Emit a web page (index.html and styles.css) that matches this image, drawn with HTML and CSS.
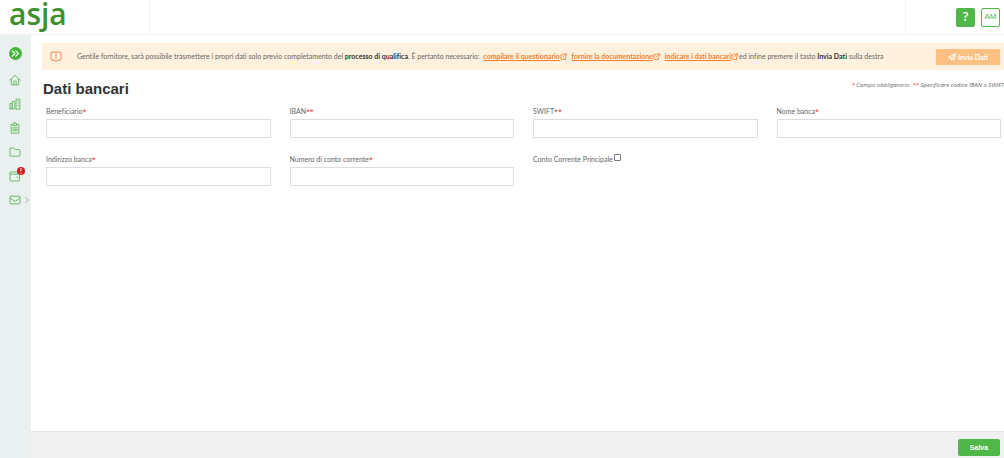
FILE: index.html
```html
<!DOCTYPE html>
<html lang="it">

<head>
  <meta charset="UTF-8">
  <meta name="viewport" content="width=device-width, initial-scale=1">
  <title>Dati bancari</title>
  <link rel="stylesheet" href="styles.css">
</head>

<body>
  <header class="topbar">
    <a class="logo" href="#">asja</a>
    <div class="topbar-actions">
      <button type="button" class="square-btn square-btn-help">?</button>
      <button type="button" class="square-btn">AM</button>
    </div>
  </header>

  <div class="layout">
    <nav class="sidebar">
      <a class="toggle" href="#" aria-label="Menu">
        <svg viewBox="0 0 12 12"><path d="M3 3.500L5.500 6 3 8.500M6.200 3.500L8.700 6 6.200 8.500" /></svg>
      </a>
      <a class="nav-item" href="#" aria-label="Home">
        <svg viewBox="0 0 12 12"><path d="M.8 6.200L6 1.200l5.200 5M2.300 5v5.800h7.400V5M4.800 10.800V7.200h2.400v3.600" /></svg>
      </a>
      <a class="nav-item" href="#" aria-label="Azienda">
        <svg viewBox="0 0 12 12"><path d="M1 10.800V5.500h2.200v5.300M3.200 10.800V3.500h2.600v7.300M7 10.800V1.200h3.800v9.600zM.6 10.800h5.200M8.900 3v.5M8.900 5.200v.5M8.900 7.400v.5" /></svg>
      </a>
      <a class="nav-item" href="#" aria-label="Questionari">
        <svg viewBox="0 0 12 12"><path d="M4 2.300H2.200v8.900h7.600V2.300H8M4.200 3.600h3.600V1.900H6.900V.8H5.100v1.100h-.9zM4 5.800h4M4 7.300h4M4 8.900h4" /></svg>
      </a>
      <a class="nav-item" href="#" aria-label="Documenti">
        <svg viewBox="0 0 12 12"><path d="M1.900 2h2.900l1.300 1.500h4q.9 0 .9.900v4.900q0 .9-.9.900H1.900Q1 10.200 1 9.300V2.900Q1 2 1.900 2z" /></svg>
      </a>
      <a class="nav-item" href="#" aria-label="Dati bancari">
        <svg viewBox="0 0 12 12"><path d="M9 2H2q-1 0-1 1v7q0 1 1 1h7.500q1 0 1-1V5q0-.8-.8-.8H1M8 7.300h.6" /></svg>
        <span class="badge">!</span>
      </a>
      <a class="nav-item" href="#" aria-label="Messaggi">
        <svg viewBox="0 0 12 12"><path d="M2 2.200h8q1 0 1 1v5.600q0 1-1 1H2q-1 0-1-1V3.200q0-1 1-1zM1.100 4l4.100 3q.8.500 1.600 0l4.100-3" /></svg>
        <svg class="chevron" viewBox="0 0 4 8"><path d="M.6 1.500L3.200 4 .6 6.500" /></svg>
      </a>
    </nav>

    <main class="main">
      <div class="notice">
        <svg class="notice-icon" viewBox="0 0 12 12"><path d="M2 1.200h8q1 0 1 1v6q0 1-1 1H7.400L6 10.800 4.600 9.200H2q-1 0-1-1v-6q0-1 1-1zM6 3v2.600M6 6.900v.4" /></svg>
        <p class="notice-text">Gentile fornitore, sarà possibile trasmettere i propri dati solo previo completamento del <b>processo di qualifica</b>. È pertanto necessario:
          <a class="notice-link" href="#"><span>compilare il questionario</span><svg viewBox="0 0 8 8"><path d="M3.300 2H1v5.300h5.300V4.800M4.500 1H7.200v2.700M7.200 1L3.500 4.700" /></svg></a>
          <a class="notice-link" href="#"><span>fornire la documentazione</span><svg viewBox="0 0 8 8"><path d="M3.300 2H1v5.300h5.300V4.800M4.500 1H7.200v2.700M7.200 1L3.500 4.700" /></svg></a>
          <a class="notice-link" href="#"><span>indicare i dati bancari</span><svg viewBox="0 0 8 8"><path d="M3.300 2H1v5.300h5.300V4.800M4.500 1H7.200v2.700M7.200 1L3.500 4.700" /></svg></a>ed infine premere il tasto <b>Invia Dati</b> sulla destra
        </p>
        <button type="button" class="btn btn-send" disabled>
          <svg viewBox="0 0 8 8"><path d="M.7 4.300L7.400.8 6.200 6.700 3.700 5.500zM7.400.8L3.500 5.300v2l1-1.400" /></svg>Invia Dati
        </button>
      </div>

      <div class="heading">
        <h1 class="title">Dati bancari</h1>
        <p class="legend"><span class="req">*</span> Campo obbligatorio &nbsp;<span class="req">**</span> Specificare codice IBAN o SWIFT</p>
      </div>

      <form class="bank-form" id="bankForm">
        <div class="field">
          <label for="beneficiario">Beneficiario<span class="req">*</span></label>
          <input class="text-input" type="text" id="beneficiario">
        </div>
        <div class="field">
          <label for="iban">IBAN<span class="req">**</span></label>
          <input class="text-input" type="text" id="iban">
        </div>
        <div class="field">
          <label for="swift">SWIFT<span class="req">**</span></label>
          <input class="text-input" type="text" id="swift">
        </div>
        <div class="field">
          <label for="banca">Nome banca<span class="req">*</span></label>
          <input class="text-input" type="text" id="banca">
        </div>
        <div class="field">
          <label for="indirizzo">Indirizzo banca<span class="req">*</span></label>
          <input class="text-input" type="text" id="indirizzo">
        </div>
        <div class="field">
          <label for="conto">Numero di conto corrente<span class="req">*</span></label>
          <input class="text-input" type="text" id="conto">
        </div>
        <div class="field field-check">
          <label for="principale">Conto Corrente Principale</label>
          <input class="check" type="checkbox" id="principale">
        </div>
      </form>

      <footer class="footer">
        <button type="submit" form="bankForm" class="btn btn-save">Salva</button>
      </footer>
    </main>
  </div>
</body>

</html>
```
FILE: styles.css
```css
* {
  box-sizing: border-box;
}

body {
  display: flex;
  flex-direction: column;
  min-height: 100vh;
  margin: 0;
  background: #fff;
  color: #666;
  font-family: Lato, "Open Sans", sans-serif;
  font-size: 7px;
  font-variant-ligatures: none;
  line-height: 10px;
}

svg {
  flex: none;
  fill: none;
  stroke: currentColor;
  stroke-linecap: round;
  stroke-linejoin: round;
}

p,
h1 {
  margin: 0;
}

button {
  padding: 0;
  border: none;
  font-family: inherit;
  cursor: pointer;
}

/* top bar */
.topbar {
  display: flex;
  justify-content: space-between;
  height: 35px;
  border-bottom: 1px solid #f0f0f0;
}

.logo {
  width: 150px;
  padding-left: 9px;
  border-right: 1px solid #f3f3f3;
  color: #41902f;
  font-family: "Open Sans", sans-serif;
  font-size: 30px;
  font-weight: 600;
  line-height: 28px;
  text-decoration: none;
}

.topbar-actions {
  display: flex;
  align-items: center;
  justify-content: flex-end;
  gap: 6px;
  width: 99px;
  padding-right: 4px;
  border-left: 1px solid #f3f3f3;
}

.square-btn {
  width: 19px;
  height: 19px;
  border: 1px solid #50b848;
  border-radius: 2px;
  background: #fff;
  color: #50b848;
  font-family: "Liberation Sans", Arial, sans-serif;
  font-size: 8px;
  line-height: 16px;
}

.square-btn-help {
  background: #50b848;
  color: #fff;
  font-family: "Open Sans", sans-serif;
  font-size: 12px;
  font-weight: 600;
}

.layout {
  display: flex;
  flex: 1;
}

/* sidebar */
.sidebar {
  display: flex;
  flex-direction: column;
  align-items: center;
  gap: 12px;
  width: 31px;
  padding: 12px 1px 0 0;
  background: #eaeff0;
}

.toggle,
.nav-item {
  position: relative;
  display: flex;
  width: 12px;
  height: 12px;
  color: #6cbf67;
}

.toggle {
  height: 13px;
  width: 13px;
  margin-bottom: 2px;
  border-radius: 50%;
  background: #45b53c;
  color: #fff;
}

.toggle svg,
.nav-item svg {
  width: 100%;
  height: 100%;
}

.badge {
  position: absolute;
  top: -3px;
  right: -4px;
  width: 8px;
  height: 8px;
  border-radius: 50%;
  background: #cf2020;
  color: #fff;
  font-size: 7px;
  font-weight: 700;
  line-height: 8px;
  text-align: center;
}

.nav-item .chevron {
  position: absolute;
  top: 2px;
  right: -8px;
  width: 4px;
  height: 8px;
  color: #a5a9aa;
}

/* content */
.main {
  display: flex;
  flex: 1;
  flex-direction: column;
  min-width: 0;
  padding-top: 8px;
}

.notice {
  display: flex;
  align-items: center;
  min-height: 27px;
  margin-left: 11px;
  padding: 0 4px 0 8px;
  background: #fff1de;
}

.notice-icon {
  width: 12px;
  height: 12px;
  margin-right: 15px;
  color: #f5855a;
}

.notice-text {
  flex: 1;
  padding-bottom: 1px;
}

.notice-text b {
  color: #333;
  font-weight: 700;
}

.notice-link {
  margin-left: 2px;
  color: #f08030;
  font-weight: 700;
  text-decoration: none;
}

.notice-link span {
  text-decoration: underline;
}

.notice-link svg {
  width: 7px;
  height: 7px;
  margin-right: 1px;
  vertical-align: -1px;
}

.btn {
  border-radius: 2px;
  color: #fff;
  font-size: 7px;
  font-weight: 700;
  line-height: 10px;
}

.btn-send {
  display: flex;
  align-items: center;
  justify-content: center;
  gap: 2px;
  width: 64px;
  height: 16px;
  border-radius: 1px;
  background: #fcc083;
}

.btn-send svg {
  width: 8px;
  height: 8px;
}

.heading {
  display: flex;
  justify-content: space-between;
  padding: 9px 0 0 12px;
}

.title {
  color: #333;
  font-family: "Liberation Sans", Arial, sans-serif;
  font-size: 15px;
  line-height: 20px;
}

.legend {
  font-family: "Open Sans", sans-serif;
  font-size: 6px;
  font-style: italic;
  line-height: 12px;
}

.req {
  color: #e02b2b;
  font-family: "Open Sans", sans-serif;
}

.bank-form {
  display: grid;
  grid-template-columns: repeat(4, 1fr);
  gap: 16px 19px;
  padding: 7px 3px 0 15px;
}

.field label {
  display: block;
  height: 10px;
  margin-bottom: 3px;
}

.text-input {
  display: block;
  width: 100%;
  height: 19px;
  padding: 0 4px;
  border: 1px solid #ddd;
  font-family: inherit;
  font-size: 7px;
}

.field-check {
  display: flex;
  align-items: flex-start;
  gap: 1px;
}

.check {
  width: 7px;
  height: 7px;
  margin: 0;
  appearance: none;
  border: 1px solid #767676;
  border-radius: 1px;
}

.check:checked {
  background: #50b848;
}

.footer {
  display: flex;
  justify-content: flex-end;
  margin-top: auto;
  padding: 7px 4px 2px;
  border-top: 1px solid #e4e4e4;
  background: #f0f0f0;
}

.btn-save {
  width: 42px;
  height: 17px;
  background: #50b848;
  font-family: "Liberation Sans", Arial, sans-serif;
}
```
